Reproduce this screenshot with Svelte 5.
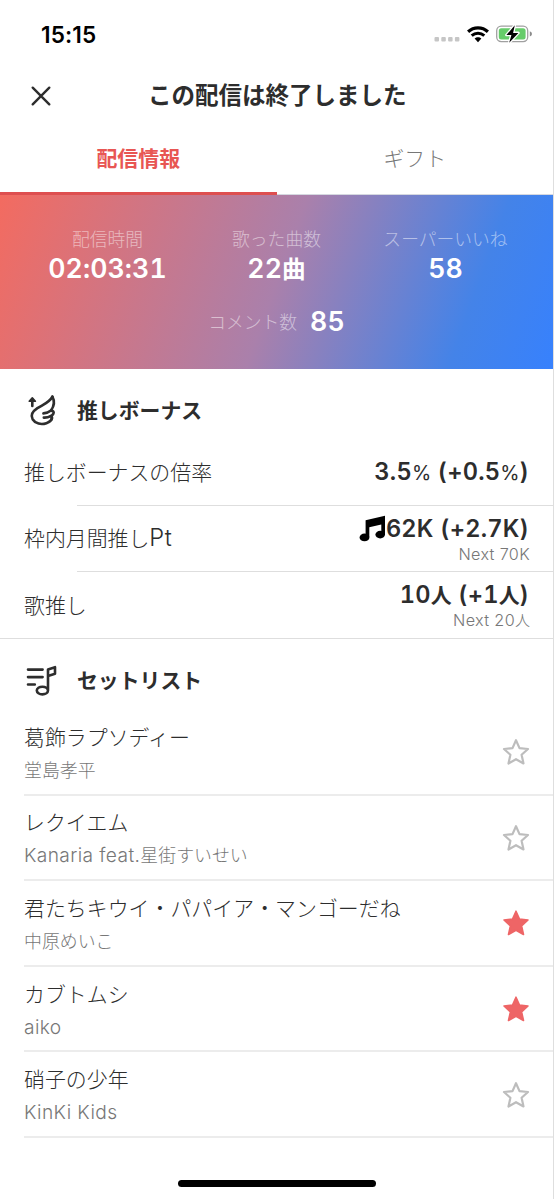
<script>
  const stats = [
    { label: '配信時間', value: '02:03:31' },
    { label: '歌った曲数', value: '22曲' },
    { label: 'スーパーいいね', value: '58' }
  ];
  const bonuses = [
    { label: '推しボーナスの倍率', value: '3.5% (+0.5%)' },
    { label: '枠内月間推しPt', value: '62K (+2.7K)', next: 'Next 70K', note: true },
    { label: '歌推し', value: '10人 (+1人)', next: 'Next 20人' }
  ];
  const songs = [
    { title: '葛飾ラプソディー', artist: '堂島孝平', starred: false },
    { title: 'レクイエム', artist: 'Kanaria feat.星街すいせい', starred: false },
    { title: '君たちキウイ・パパイア・マンゴーだね', artist: '中原めいこ', starred: true },
    { title: 'カブトムシ', artist: 'aiko', starred: true },
    { title: '硝子の少年', artist: 'KinKi Kids', starred: false }
  ];
  // Latin runs are set in a slightly larger face than the Japanese around them.
  const runs = (text) => text.match(/%|[\x20-\x24\x26-\x7e]+|[^\x20-\x7e]+/g) ?? [];
  const isLatin = (run) => /^[\x20-\x7e]/.test(run);
</script>

{#snippet mixed(text)}{#each runs(text) as run}<span class:latin={isLatin(run)} class:percent={run === '%'}>{run}</span>{/each}{/snippet}

<main class="screen">
  <div class="status">
    <span class="clock">15:15</span>
    <div class="indicators">
      <svg width="27" height="6" viewBox="0 0 27 6" fill="#c6c6c6">
        <rect x="0.5" y="1" width="4.5" height="4.5" rx="1" /><rect x="7.3" y="1" width="4.5" height="4.5" rx="1" />
        <rect x="14.1" y="1" width="4.5" height="4.5" rx="1" /><rect x="20.9" y="1" width="4.5" height="4.5" rx="1" />
      </svg>
      <svg class="wifi" width="22" height="17" viewBox="0 0 22 17">
        <path d="M1.1 5.8C6.8 .6 15.2 .6 20.9 5.8" fill="none" stroke="#000" stroke-width="3.2" />
        <path d="M4.7 9.7C8.4 6.4 13.6 6.4 17.3 9.7" fill="none" stroke="#000" stroke-width="3" />
        <path d="M7.6 12.6C9.5 10.8 12.5 10.8 14.4 12.6L11 16.2Z" fill="#000" />
      </svg>
      <svg class="battery" width="37" height="18" viewBox="0 0 37 18">
        <rect x=".7" y="1.2" width="31" height="15.4" rx="4.5" fill="#fff" stroke="#a0a0a0" stroke-width="1.3" />
        <rect x="2.8" y="3.2" width="26.8" height="11.4" rx="2.5" fill="#66cc6a" />
        <path d="M33.8 6.2Q36 7 36 8.9T33.8 11.6Z" fill="#8c8c8c" />
        <path d="M18.8 .2L10.4 10H15.4L13.2 17.8L22.4 7.9H17.1Z" fill="#000" stroke="#fff" stroke-width="2.6" stroke-linejoin="round" paint-order="stroke" />
      </svg>
    </div>
  </div>

  <header>
    <svg class="close" width="20" height="20" viewBox="0 0 20 20">
      <path d="M1.7 1.7L18.3 18.3M18.3 1.7L1.7 18.3" stroke="#2d2d2d" stroke-width="2.4" stroke-linecap="round" />
    </svg>
    <h1>この配信は終了しました</h1>
  </header>

  <nav>
    <span class="tab active">配信情報</span>
    <span class="tab">ギフト</span>
  </nav>

  <section class="summary">
    <div class="stats">
      {#each stats as stat}
        <div class="stat">
          <span class="label">{stat.label}</span>
          <span class="number">{@render mixed(stat.value)}</span>
        </div>
      {/each}
    </div>
    <div class="comments">
      <span class="label">コメント数</span>
      <span class="number">{@render mixed('85')}</span>
    </div>
  </section>

  <section class="bonus">
    <h2>
      <svg width="34" height="34" viewBox="0 0 34 34" fill="none" stroke="#2d2d2d" stroke-width="2.6" stroke-linecap="round" stroke-linejoin="round">
        <path d="M8.3 13V6.4" /><path d="M5.2 8.2L8.3 4.8L11.4 8.2Z" fill="#2d2d2d" stroke-width="1.6" />
        <path d="M28.4 3.6C25.6 9.4 19.4 11.4 13.4 15.2C8 18.8 6.2 22 8.6 26.2C11.4 30.8 17.2 32 22.4 30.2C26 28.9 27.6 26.8 27.8 25" />
        <path d="M28.4 3.6C30.8 8 30 13.2 27 17.6C29.6 17.9 30.3 19.2 29.2 21C28.5 22.1 27.6 22.8 26.6 23.2C28.3 23.6 28.5 25.2 27.4 26.6" />
        <path d="M19.4 20.4C22.4 20.2 25 19.2 27 17.6M19.8 24.6C22.4 24.7 24.7 24.2 26.6 23.2" />
      </svg>
      <span>推しボーナス</span>
    </h2>
    {#each bonuses as bonus}
      <div class="row">
        <span class="name">{@render mixed(bonus.label)}</span>
        <div class="result">
          <div class="value">
            {#if bonus.note}
              <svg width="27" height="27" viewBox="0 0 27 27">
                <path d="M6.6 5.2L26 .8V20H22.3V9.4L10.3 12.2V22H6.6Z" fill="#000" />
                <ellipse cx="5.5" cy="22.4" rx="4.9" ry="3.9" /><ellipse cx="21.2" cy="19.6" rx="4.8" ry="3.8" />
              </svg>
            {/if}
            <span>{@render mixed(bonus.value)}</span>
          </div>
          {#if bonus.next}<div class="next">{@render mixed(bonus.next)}</div>{/if}
        </div>
      </div>
    {/each}
  </section>

  <section class="setlist">
    <h2>
      <svg width="34" height="34" viewBox="0 0 34 34" fill="none" stroke="#2d2d2d" stroke-width="2.6" stroke-linecap="round" stroke-linejoin="round">
        <path d="M4 6.6H18.6M4 14.1H18.6M4 21.5H10.8" />
        <path d="M24 26.6V6.5L31 4.2V10.8L24 12.9" />
        <ellipse cx="18.4" cy="27.6" rx="5.6" ry="3.8" />
      </svg>
      <span>セットリスト</span>
    </h2>
    {#each songs as song}
      <article>
        <div class="song">
          <div class="title">{song.title}</div>
          <div class="artist">{@render mixed(song.artist)}</div>
        </div>
        <svg class="star" class:starred={song.starred} width="28" height="28" viewBox="0 0 28 28">
          <path d="M14 2.2L17.5 10.1L26 11L19.6 16.8L21.5 25.5L14 21.2L6.5 25.5L8.4 16.8L2 11L10.5 10.1Z" />
        </svg>
      </article>
    {/each}
  </section>

  <div class="home"></div>
</main>

<style>
  :global(body) { margin: 0; background: #fff; }
  .screen {
    box-sizing: border-box;
    width: 554px;
    height: 1199px;
    overflow: hidden;
    display: flex;
    flex-direction: column;
    border-right: 1px solid #dedede;
    background: #fff;
    color: #2d2d2d;
    font-family: "Noto Sans CJK JP", sans-serif;
    font-size: 20.9px;
    font-weight: 300;
    line-height: 1;
    white-space: nowrap;
  }
  svg { display: block; flex: none; }
  .latin { font-family: Inter, sans-serif; font-size: 1.1em; white-space: pre; }
  .status { height: 68px; display: flex; justify-content: space-between; padding: 0 20px 0 41px; }
  .clock { font: 600 22.6px/69px Inter, sans-serif; color: #000; letter-spacing: .1px; }
  .indicators { display: flex; align-items: center; gap: 7px; }
  .indicators svg:first-child { margin-top: 10px; }
  .wifi { margin-left: -1px; }
  header { height: 55px; display: flex; align-items: center; }
  .close { margin-left: 31px; }
  h1 { margin: -3px 0 0 97px; font-size: 23.5px; font-weight: 700; line-height: 34px; }
  nav { height: 72px; display: flex; box-sizing: border-box; border-bottom: 1px solid #d5d8e0; }
  .tab { flex: 1; box-sizing: border-box; height: 72px; text-align: center; line-height: 69px; color: #777; }
  .active { color: #e85653; font-weight: 700; border-bottom: 3px solid #de4f50; }
  .summary {
    height: 174px;
    box-sizing: border-box;
    padding-top: 31px;
    color: #fff;
    background: linear-gradient(110deg, #f36b60 0%, #aa80ab 50%, #4483e8 83%, #3781fd 100%);
  }
  .stats { display: grid; grid-template-columns: repeat(3, 169px); justify-content: center; }
  .stat { display: flex; flex-direction: column; align-items: center; }
  .label { font-size: 17.8px; line-height: 24px; color: #ffffff80; }
  .number { font-size: 23.6px; font-weight: 700; line-height: 36px; }
  .number .latin { font-size: 1.13em; font-weight: 600; font-feature-settings: "tnum"; letter-spacing: .1px; }
  .comments { display: flex; align-items: center; justify-content: center; gap: 13px; padding-top: 17px; }
  h2 { margin: 0; display: flex; align-items: center; gap: 19px; padding-left: 24px; font-size: 20.85px; font-weight: 700; }
  .bonus h2 { height: 70px; padding-top: 11px; box-sizing: border-box; }
  .bonus { height: 269px; border-bottom: 1px solid #dedede; }
  .row { position: relative; height: 66.5px; box-sizing: border-box; display: flex; align-items: center; justify-content: space-between; padding: 0 24px 0; }
  .row + .row::before { content: ""; position: absolute; left: 77px; right: 0; top: -1px; height: 1px; background: #dedede; }
  .name { margin-top: -3px; line-height: 30px; }
  .name .latin { font-size: 1.13em; letter-spacing: .5px; }
  .result { text-align: right; }
  .value { display: flex; align-items: center; justify-content: flex-end; font-weight: 700; line-height: 28px; }
  .value .latin { font-weight: 600; font-size: 1.13em; font-feature-settings: "tnum"; letter-spacing: .22px; }
  .value .percent { font-weight: 400; font-size: .94em; letter-spacing: 0; }
  .next { margin: 1px -1px 0 0; font-size: 15px; line-height: 20px; color: #777; }
  .next .latin { font-size: 1.08em; letter-spacing: .35px; }
  .setlist h2 { height: 71px; padding-top: 10px; box-sizing: border-box; }
  article { height: 85.6px; margin-left: 24px; padding: 1px 24px 0 0; box-sizing: border-box; display: flex; align-items: center; justify-content: space-between; border-bottom: 2px solid #ececec; }
  .title { line-height: 29px; letter-spacing: .03px; }
  .artist { margin-top: 5px; font-size: 17.9px; line-height: 26px; color: #777; }
  .artist .latin { font-size: 1.07em; letter-spacing: .4px; }
  .star { margin-right: -.5px; fill: #fff; stroke: #bdbdbd; stroke-width: 2.2; stroke-linejoin: round; }
  .star.starred { fill: #ee6566; stroke: #ee6566; stroke-width: 1.6; }
  .home { width: 198px; height: 7px; margin: 42px 0 0 178px; border-radius: 4px; background: #000; }
</style>
